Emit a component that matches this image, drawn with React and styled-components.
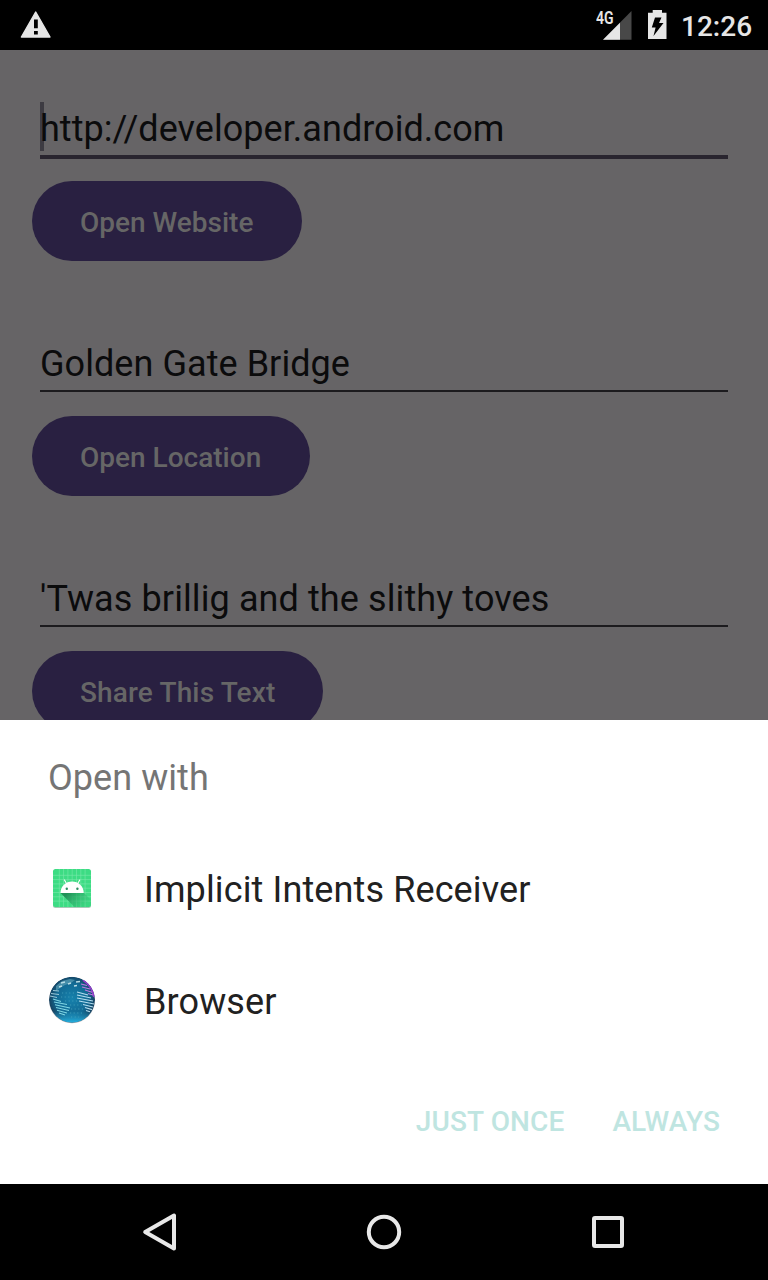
import React from "react";
import styled, { createGlobalStyle } from "styled-components";

const GlobalStyle = createGlobalStyle`
  * { box-sizing: border-box; }
  body { margin: 0; background: #000; font-family: Roboto, "Liberation Sans", sans-serif; }
`;

const Screen = styled.div`
  width: 768px;
  height: 1280px;
  display: flex;
  flex-direction: column;
  overflow: hidden;
`;

const StatusBar = styled.header`
  height: 50px;
  flex: none;
  display: flex;
  align-items: flex-start;
  padding: 0 16px 0 20px;
  background: #000;
  color: #e6e6e6;
`;

const StatusIcon = styled.svg`
  display: block;
  flex: none;
  margin-right: ${(p) => p.$gap || 0}px;
`;

const Spacer = styled.div`
  flex: 1;
`;

const Network = styled.div`
  width: 40px;
  height: 50px;
  position: relative;
  margin-right: 12px;
`;

const NetworkLabel = styled.span`
  position: absolute;
  left: 0.5px;
  top: 9px;
  font-size: 17.5px;
  line-height: 18px;
  font-weight: 600;
  transform: scaleX(0.8);
  transform-origin: left;
`;

const Clock = styled.time`
  font-size: 28px;
  line-height: 32px;
  font-weight: 500;
  margin-top: 11px;
  width: 71px;
  white-space: nowrap;
`;

const Page = styled.main`
  height: 670px;
  flex: none;
  overflow: hidden;
  background: #666466;
  padding: 48px 40px 0;
`;

const Group = styled.section`
  height: 235px;
`;

const Field = styled.div`
  position: relative;
  height: ${(p) => (p.$focused ? 61 : 59)}px;
  margin-bottom: ${(p) => (p.$focused ? 22 : 24)}px;
  border-bottom: ${(p) => (p.$focused ? "4px solid #29252f" : "2px solid #1c1b1e")};
  color: #0b0b0c;
  font-size: 36px;
  line-height: 42px;
  padding-top: 10px;
  white-space: nowrap;
  letter-spacing: ${(p) => p.$tracking || 0}px;
`;

const Caret = styled.i`
  position: absolute;
  left: 0;
  top: 4px;
  width: 4px;
  height: 49px;
  background: #3d3b42;
`;

const FieldText = styled.span`
  position: relative;
`;

const PillButton = styled.button`
  display: block;
  width: ${(p) => p.$width}px;
  height: 80px;
  margin-left: -8px;
  padding: 3px 0 0 48px;
  border: 0;
  border-radius: 40px;
  background: #292041;
  color: #666;
  font: 500 28px/32px Roboto, sans-serif;
  letter-spacing: ${(p) => p.$tracking || 0}px;
  text-align: left;
  white-space: nowrap;
`;

const Sheet = styled.section`
  height: 464px;
  flex: none;
  display: flex;
  flex-direction: column;
  background: #fff;
`;

const SheetTitle = styled.h1`
  margin: 0;
  height: 112px;
  padding: 37px 48px 0;
  font-size: 36px;
  line-height: 42px;
  font-weight: 400;
  color: #757575;
  letter-spacing: 0.06px;
`;

const Option = styled.div`
  height: 112px;
  display: flex;
  align-items: center;
  gap: 48px;
  padding: 0 48px;
  font-size: 36px;
  line-height: 42px;
  color: #212121;
  letter-spacing: 0.12px;
`;

const OptionLabel = styled.span`
  padding-top: 4px;
`;

const Actions = styled.div`
  display: flex;
  justify-content: flex-end;
  gap: 48px;
  padding: 50px 48px 0;
`;

const Action = styled.button`
  border: 0;
  padding: 0;
  background: none;
  color: #bfe5e1;
  font: 500 28px/32px Roboto, sans-serif;
  letter-spacing: 0.12px;
`;

const NavBar = styled.nav`
  height: 96px;
  flex: none;
  display: flex;
  justify-content: center;
  gap: 176px;
  align-items: center;
  background: #000;
`;

const NavIcon = styled.svg`
  display: block;
  width: 48px;
  height: 48px;
  fill: none;
  stroke: #e8e8e8;
  stroke-width: 4;
  stroke-linejoin: round;
`;

const entries = [
  { text: "http://developer.android.com", tracking: 0.04, label: "Open Website", width: 270, focused: true },
  { text: "Golden Gate Bridge", tracking: 0.06, label: "Open Location", width: 278 },
  { text: "'Twas brillig and the slithy toves", tracking: 0.1, label: "Share This Text", width: 291, labelTracking: 0.15 },
];

const grid = [11.3, 15.6, 19.9, 24.2, 28.5, 32.8, 37.1];

function ReceiverIcon() {
  return (
    <svg width="48" height="48" viewBox="0 0 48 48">
      <defs>
        <linearGradient id="shade" gradientUnits="userSpaceOnUse" x1="22" y1="27" x2="37" y2="42">
          <stop offset="0" stopColor="#1f9157" />
          <stop offset="1" stopColor="#2fb56e" stopOpacity=".15" />
        </linearGradient>
      </defs>
      <rect x="5" y="6" width="38" height="38" rx="2.5" fill="#a9c9b7" />
      <rect x="5" y="5" width="38" height="38" rx="2.5" fill="#3ddc84" />
      <path d={grid.map((v) => `M${v} 5V43M5 ${v}H43`).join("")} stroke="#79e8ab" strokeWidth=".6" />
      <path d="M12.5 29L26.5 43H40.5Q43 43 43 40.5V36L35.5 28.5Z" fill="url(#shade)" />
      <path d="M12.5 29A11.6 11.6 0 0 1 35.7 29Z" fill="#fff" />
      <path d="M19 20.5L16.5 16M29.2 20.5L31.7 16" stroke="#fff" strokeWidth="1.1" strokeLinecap="round" />
      <circle cx="18.8" cy="24.8" r="1.2" fill="#2d8f60" />
      <circle cx="29.4" cy="24.8" r="1.2" fill="#2d8f60" />
    </svg>
  );
}

function BrowserIcon() {
  return (
    <svg width="48" height="48" viewBox="0 0 48 48">
      <defs>
        <radialGradient id="sea" cx=".5" cy=".48" r=".53">
          <stop offset="0" stopColor="#1681ac" />
          <stop offset=".65" stopColor="#126a94" />
          <stop offset=".9" stopColor="#154868" />
          <stop offset="1" stopColor="#253c59" />
        </radialGradient>
        <linearGradient id="glow" x1="0" y1="0" x2="0" y2="1">
          <stop offset=".75" stopColor="#24b5e5" stopOpacity="0" />
          <stop offset="1" stopColor="#24b5e5" />
        </linearGradient>
        <clipPath id="disc"><circle cx="24" cy="23.7" r="23" /></clipPath>
      </defs>
      <circle cx="24" cy="24.2" r="23" fill="#68747e" opacity=".5" />
      <g clipPath="url(#disc)" fill="none">
        <circle cx="24" cy="23.7" r="23" fill="url(#sea)" />
        <circle cx="24" cy="23.7" r="23" fill="url(#glow)" />
        <path d="M8 10L14 5L22 3L27 4L23 7L17 9L12 12L8 15Z" fill="#5b9fb7" opacity=".7" />
        <path d="M13 7L17 6M20 8L23 7M28 6L32 5.5M26 10L29 9.5M11 11L14 10" stroke="#b8dce5" strokeWidth="1.4" />
        <path d="M5 14.5L11 15M3 17.5L11 18.5M2 20L9 21.5" stroke="#9cc8d8" strokeWidth="1" />
        <path d="M5 23L13 25.5M6 26L19 28.5M7 28.8L22 32M8 31.5L21 34.5M9 34.2L19 37M11 37L17 39" stroke="#7fd6e4" strokeWidth="1.1" />
        <path d="M29 16L40 19M29 19L43 22M29 22L45 25M31 25L46 28M35 28.5L45 31M37 31.5L44 33.6M38 34.5L42 35.8" stroke="#b3dcee" strokeWidth="1.2" />
        <path d="M35 4Q44 10 46 21" stroke="#8f3fc8" strokeWidth="2" />
        <path d="M33 8L39 9.5M34 11L42 13M37 14L44 16.2M40 17.5L45 19" stroke="#c178e0" strokeWidth="1.1" />
        <path d="M14 17H26M13 21H27M17 25H30M22 29H34M23 33H35M22 37H34M23 41H31" stroke="#46a2bd" strokeWidth=".8" strokeDasharray="1.2 2.4" />
      </g>
    </svg>
  );
}

export default function App() {
  return (
    <>
      <GlobalStyle />
      <Screen>
        <StatusBar>
          <StatusIcon width="32" height="50" viewBox="0 0 32 50">
            <path d="M15.7 12L30 37H1.4Z" fill="#e6e6e6" stroke="#e6e6e6" strokeWidth="1.4" strokeLinejoin="round" />
            <path d="M14 19.5h3.8v8.7H14zM14 31h3.8v3.5H14z" fill="#000" />
          </StatusIcon>
          <Spacer />
          <Network>
            <StatusIcon width="40" height="50" viewBox="0 0 40 50">
              <path d="M36.5 11V39.7H8Z" fill="#484848" />
              <path d="M25 22.7V39.7H8Z" fill="#e6e6e6" />
            </StatusIcon>
            <NetworkLabel>4G</NetworkLabel>
          </Network>
          <StatusIcon width="20" height="50" viewBox="0 0 20 50" $gap={14}>
            <path d="M1 12.7H5.7V10H15V12.7H19.5V39H1Z" fill="#e6e6e6" />
            <path d="M8 17.5H14.5L12 23H16.5L6.5 36L8.6 27.5H4.8Z" fill="#000" />
          </StatusIcon>
          <Clock>12:26</Clock>
        </StatusBar>
        <Page>
          {entries.map((e) => (
            <Group key={e.label}>
              <Field $focused={e.focused} $tracking={e.tracking}>
                {e.focused && <Caret />}
                <FieldText>{e.text}</FieldText>
              </Field>
              <PillButton $width={e.width} $tracking={e.labelTracking}>{e.label}</PillButton>
            </Group>
          ))}
        </Page>
        <Sheet>
          <SheetTitle>Open with</SheetTitle>
          <Option>
            <ReceiverIcon />
            <OptionLabel>Implicit Intents Receiver</OptionLabel>
          </Option>
          <Option>
            <BrowserIcon />
            <OptionLabel>Browser</OptionLabel>
          </Option>
          <Actions>
            <Action>JUST ONCE</Action>
            <Action>ALWAYS</Action>
          </Actions>
        </Sheet>
        <NavBar>
          <NavIcon viewBox="0 0 48 48"><path d="M9.2 24L38 7.5V40.5Z" /></NavIcon>
          <NavIcon viewBox="0 0 48 48"><circle cx="24" cy="24" r="15.2" /></NavIcon>
          <NavIcon viewBox="0 0 48 48"><rect x="10" y="10" width="28" height="28" rx="1" /></NavIcon>
        </NavBar>
      </Screen>
    </>
  );
}
